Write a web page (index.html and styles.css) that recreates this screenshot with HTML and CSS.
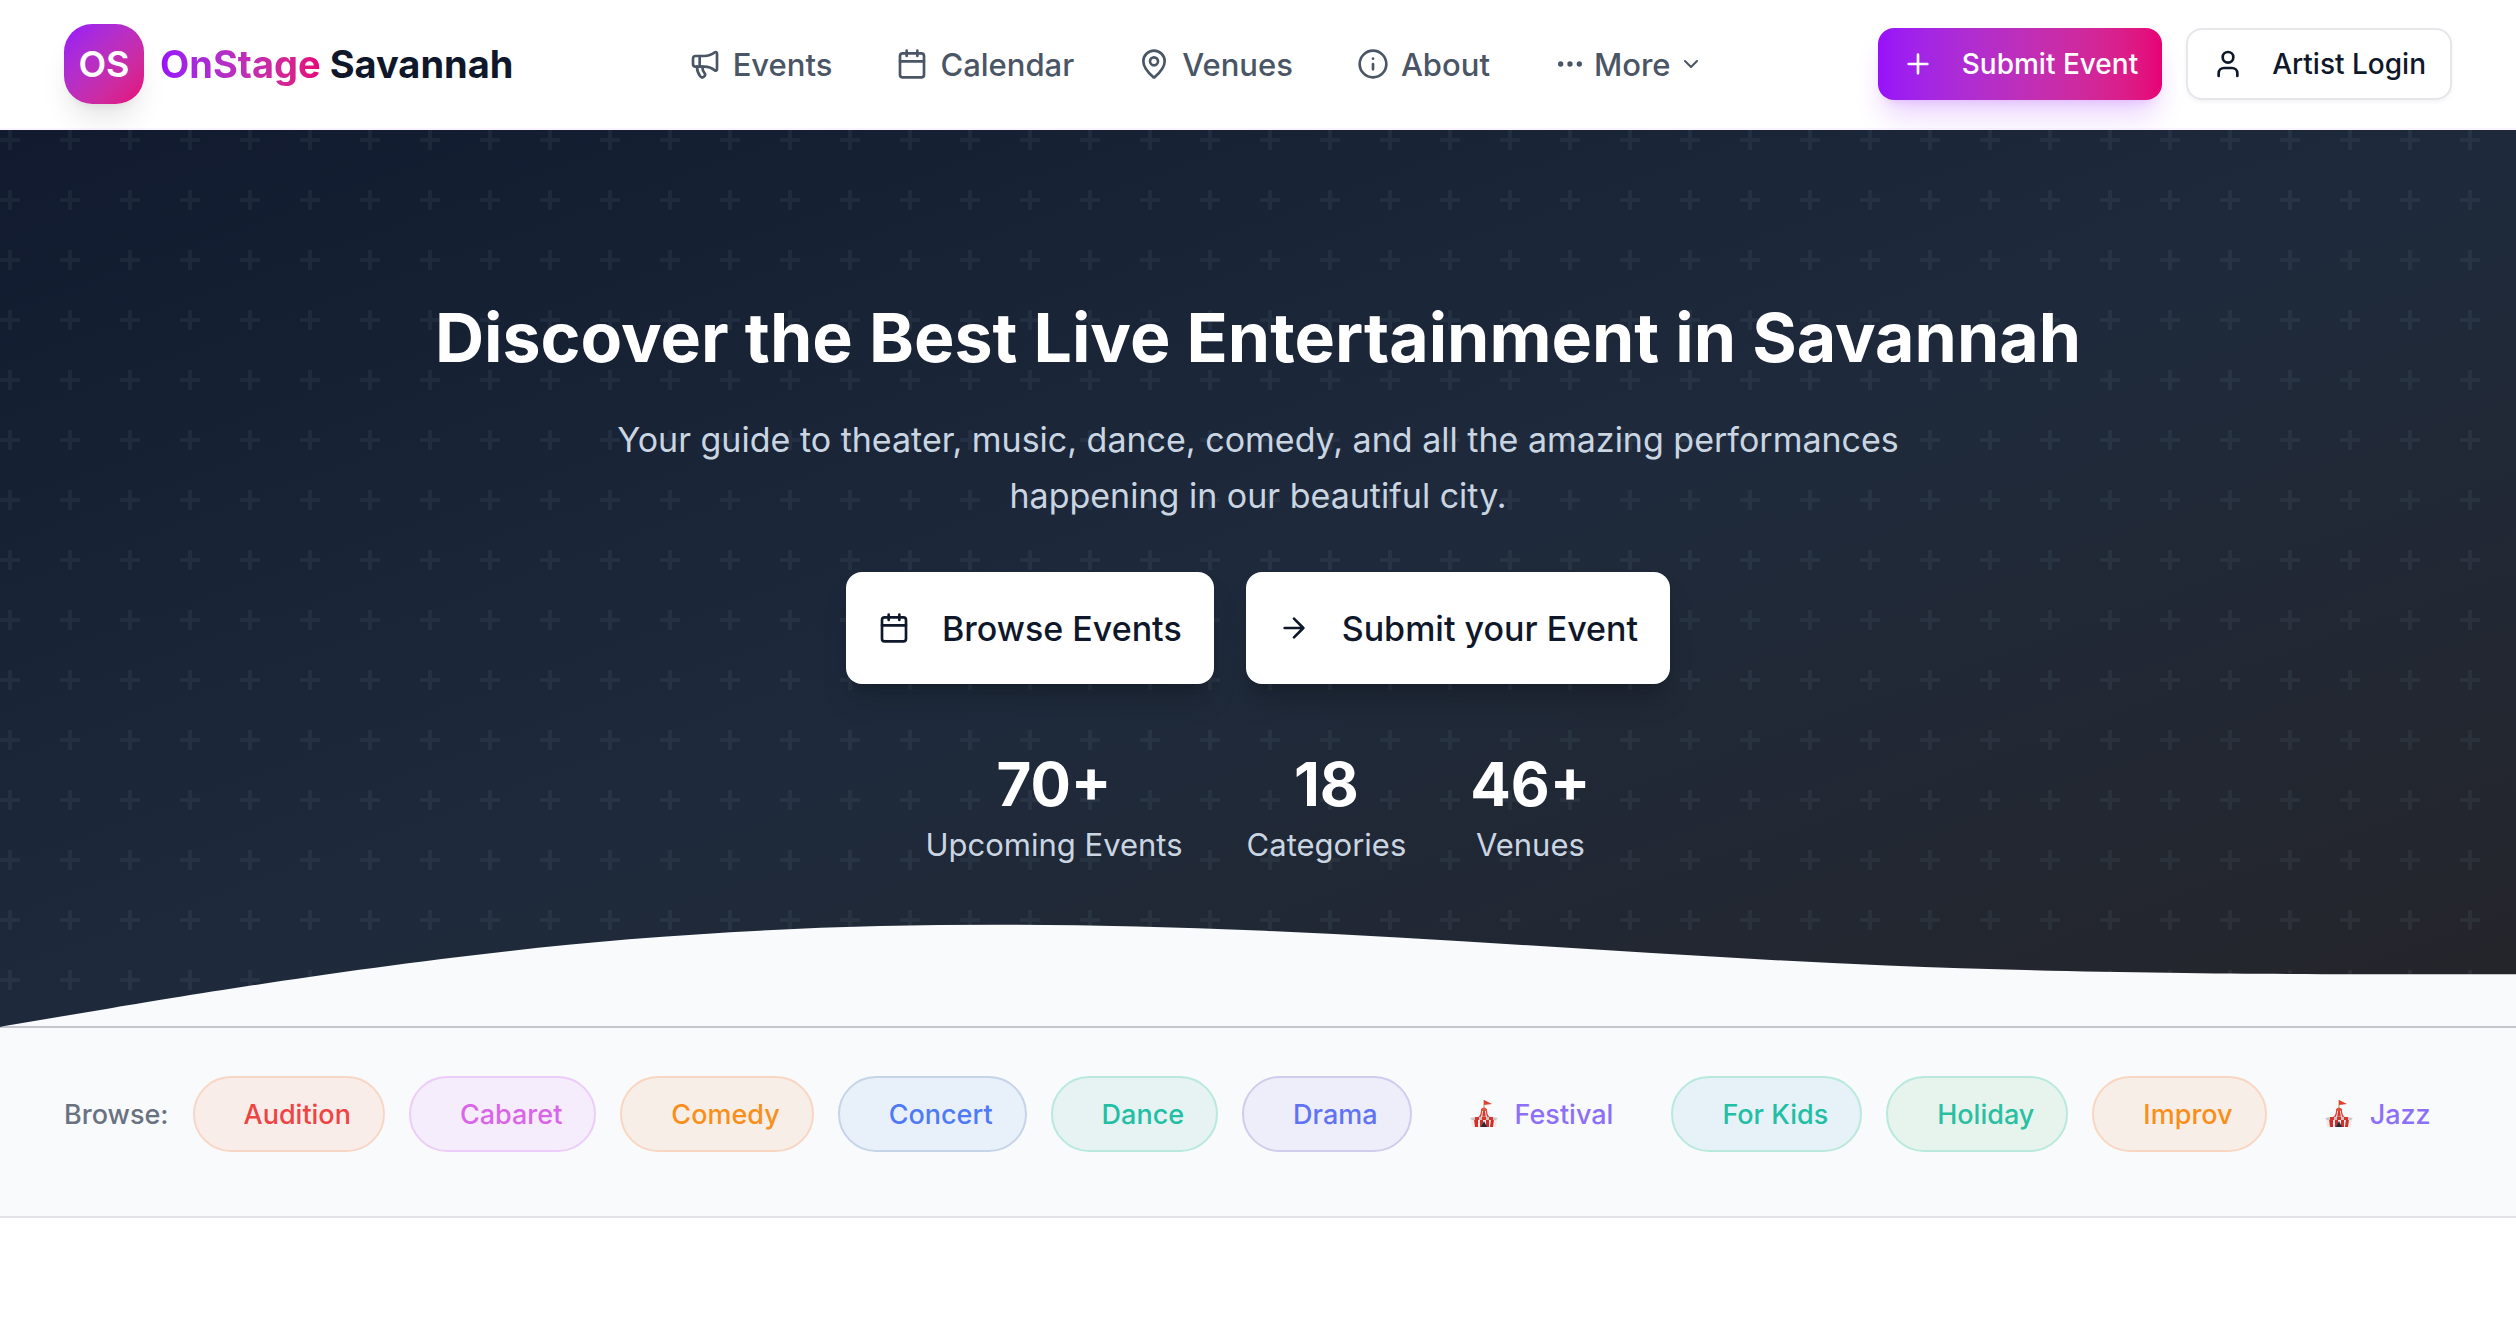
FILE: index.html
```
<!DOCTYPE html>
<html lang="en">
<head>
    <meta charset="UTF-8">
    <meta name="viewport" content="width=device-width, initial-scale=1.0">
    <title>OnStage Savannah</title>
    <link rel="stylesheet" href="styles.css">
</head>
<body>
    <!-- Shared shapes -->
    <svg class="sprite" aria-hidden="true">
        <symbol id="icon-calendar" viewBox="0 0 24 24">
            <path d="M8 2v4M16 2v4M3 10h18"/>
            <rect x="3" y="4" width="18" height="18" rx="2"/>
        </symbol>
        <symbol id="icon-tent" viewBox="0 0 28 28">
            <path d="M14 9V0" stroke="#c98a5a" stroke-width="1"/>
            <path d="M14 0l8 4-8 1z" fill="#e2402f"/>
            <path d="M11 9q3-3 6 0v3h-6z" fill="#e0523f"/>
            <path d="M11 11h6c1 4 4 6 7 8H4c3-2 6-4 7-8z" fill="#f3ebe9"/>
            <path d="M13 11h2l1 8h-4zM11 11h1c0 4-1 6-3 8H6c3-2 5-4 5-8zM17 11h-1c0 4 1 6 3 8h3c-3-2-5-4-5-8z" fill="#d6362c"/>
            <path d="M1 18h26l-1 9H2z" fill="#f0eae9"/>
            <path d="M4 19h4v8H5zM10 19h3v8h-3zM16 19h3v8h-3zM21 19h3l-1 8h-3z" fill="#cf2f28"/>
            <path d="M0 18q14-3 28 0l-2 2H2z" fill="#c9c4c8"/>
            <path d="M5 17h4v3H5zM12 17h4v3h-4zM19 17h4v3h-4z" fill="#d6362c"/>
            <path d="M14 21l3 6h-6z" fill="#1f2c40"/>
        </symbol>
    </svg>

    <header class="site-header">
        <a href="#" class="brand">
            <span class="brand-mark">OS</span>
            <span class="brand-name"><span class="brand-accent">OnStage</span> Savannah</span>
        </a>

        <nav class="main-nav">
            <a href="#">
                <svg class="icon" viewBox="0 0 24 24"><path d="M11 6a13 13 0 0 0 8.400-2.800A1 1 0 0 1 21 4v12a1 1 0 0 1-1.600.8A13 13 0 0 0 11 14H5a2 2 0 0 1-2-2V8a2 2 0 0 1 2-2z"/><path d="M6 14a12 12 0 0 0 2.400 7.200 2 2 0 0 0 3.200-2.400A8 8 0 0 1 10 14M8 6v8"/></svg>
                Events
            </a>
            <a href="#">
                <svg class="icon"><use href="#icon-calendar"/></svg>
                Calendar
            </a>
            <a href="#">
                <svg class="icon" viewBox="0 0 24 24"><path d="M20 10c0 4.993-5.539 10.193-7.399 11.799a1 1 0 0 1-1.202 0C9.539 20.193 4 14.993 4 10a8 8 0 0 1 16 0"/><circle cx="12" cy="10" r="3"/></svg>
                Venues
            </a>
            <a href="#">
                <svg class="icon" viewBox="0 0 24 24"><circle cx="12" cy="12" r="10"/><path d="M12 16v-4M12 8h.01"/></svg>
                About
            </a>
            <button type="button" class="nav-more">
                <svg class="icon" viewBox="0 0 24 24"><circle cx="12" cy="12" r="1"/><circle cx="19" cy="12" r="1"/><circle cx="5" cy="12" r="1"/></svg>
                More
                <svg class="icon icon-small" viewBox="0 0 24 24"><path d="m6 9 6 6 6-6"/></svg>
            </button>
        </nav>

        <div class="header-actions">
            <button type="button" class="btn btn-primary">
                <svg class="icon" viewBox="0 0 24 24"><path d="M5 12h14M12 5v14"/></svg>
                Submit Event
            </button>
            <button type="button" class="btn btn-outline">
                <svg class="icon" viewBox="0 0 24 24"><path d="M19 21v-2a4 4 0 0 0-4-4H9a4 4 0 0 0-4 4v2"/><circle cx="12" cy="7" r="4"/></svg>
                Artist Login
            </button>
        </div>
    </header>

    <main>
        <section class="hero">
            <svg class="hero-pattern" aria-hidden="true">
                <defs>
                    <pattern id="plus" width="60" height="60" patternUnits="userSpaceOnUse">
                        <path d="M8 0h4v8h8v4h-8v8H8v-8H0V8h8z" fill="#8aa0b4" fill-opacity="0.08"/>
                    </pattern>
                </defs>
                <rect width="100%" height="100%" fill="url(#plus)"/>
            </svg>

            <div class="hero-content">
                <h1>Discover the Best Live Entertainment in Savannah</h1>
                <p class="hero-lead">Your guide to theater, music, dance, comedy, and all the amazing performances happening in our beautiful city.</p>

                <div class="hero-actions">
                    <button type="button" class="btn btn-large">
                        <svg class="icon"><use href="#icon-calendar"/></svg>
                        Browse Events
                    </button>
                    <button type="button" class="btn btn-large">
                        <svg class="icon" viewBox="0 0 24 24"><path d="M5 12h14M12 5l7 7-7 7"/></svg>
                        Submit your Event
                    </button>
                </div>

                <div class="stats">
                    <div class="stat">
                        <div class="stat-value">70+</div>
                        <div class="stat-label">Upcoming Events</div>
                    </div>
                    <div class="stat">
                        <div class="stat-value">18</div>
                        <div class="stat-label">Categories</div>
                    </div>
                    <div class="stat">
                        <div class="stat-value">46+</div>
                        <div class="stat-label">Venues</div>
                    </div>
                </div>
            </div>

            <svg class="hero-wave" viewBox="0 0 1440 120" preserveAspectRatio="none" aria-hidden="true">
                <path d="M0 120L60 110C120 100 240 80 360 70C480 60 600 60 720 65C840 70 960 80 1080 85C1200 90 1320 90 1380 90L1440 90V120H0Z"/>
            </svg>
        </section>

        <section class="browse">
            <div class="browse-row">
                <span class="browse-label">Browse:</span>
                <a href="#" class="pill pill-red"><span></span>Audition</a>
                <a href="#" class="pill pill-pink"><span></span>Cabaret</a>
                <a href="#" class="pill pill-orange"><span></span>Comedy</a>
                <a href="#" class="pill pill-blue"><span></span>Concert</a>
                <a href="#" class="pill pill-teal"><span></span>Dance</a>
                <a href="#" class="pill pill-indigo"><span></span>Drama</a>
                <a href="#" class="pill pill-plain"><svg class="emoji"><use href="#icon-tent"/></svg>Festival</a>
                <a href="#" class="pill pill-sky"><span></span>For Kids</a>
                <a href="#" class="pill pill-green"><span></span>Holiday</a>
                <a href="#" class="pill pill-orange"><span></span>Improv</a>
                <a href="#" class="pill pill-plain"><svg class="emoji"><use href="#icon-tent"/></svg>Jazz</a>
            </div>
        </section>
    </main>
</body>
</html>
```

FILE: styles.css
```
* {
    box-sizing: border-box;
}
body {
    margin: 0;
    background: white;
    color: #0f172a;
    font-family: Inter, "Liberation Sans", sans-serif;
    overflow-x: hidden;
}
a {
    color: inherit;
    text-decoration: none;
}
button {
    font-family: inherit;
    cursor: pointer;
}
.sprite {
    position: absolute;
    width: 0;
    height: 0;
}
.icon {
    width: 32px;
    height: 32px;
    flex-shrink: 0;
    fill: none;
    stroke: currentColor;
    stroke-width: 2;
    stroke-linecap: round;
    stroke-linejoin: round;
}
.icon-small {
    width: 24px;
    height: 24px;
}

/* Header */
.site-header {
    display: flex;
    justify-content: space-between;
    align-items: center;
    padding: 24px 64px;
    border-bottom: 2px solid #faf5ff;
}
.brand {
    display: flex;
    align-items: center;
    gap: 16px;
}
.brand-mark {
    display: flex;
    align-items: center;
    justify-content: center;
    width: 80px;
    height: 80px;
    border-radius: 28px;
    background: linear-gradient(135deg in oklab, #9810fa, #e60076);
    color: white;
    font-size: 36px;
    font-weight: 600;
    box-shadow: 0 20px 30px -6px rgba(0,0,0,0.1), 0 8px 12px -8px rgba(0,0,0,0.1);
}
.brand-name {
    font-size: 38px;
    font-weight: 700;
}
.brand-accent {
    background: linear-gradient(90deg in oklab, #9810fa, #e60076);
    background-clip: text;
    -webkit-background-clip: text;
    color: transparent;
}
.main-nav {
    display: flex;
    align-items: center;
    gap: 64px;
    color: #4a5565;
    font-size: 31px;
    font-weight: 500;
}
.main-nav a {
    display: flex;
    align-items: center;
    gap: 12px;
}
.nav-more {
    display: flex;
    align-items: center;
    gap: 8px;
    padding: 0;
    border: none;
    background: none;
    color: inherit;
    font-size: 31px;
    font-weight: 500;
}
.header-actions {
    display: flex;
    gap: 24px;
}
.btn {
    display: flex;
    align-items: center;
    gap: 28px;
    height: 72px;
    padding: 0 24px;
    border: none;
    border-radius: 16px;
    background: white;
    color: #0f172a;
    font-size: 28px;
    font-weight: 500;
}
.btn-primary {
    background: linear-gradient(90deg in oklab, #9810fa, #e60076);
    color: white;
    box-shadow: 0 20px 30px -6px rgba(152,16,250,0.2), 0 8px 12px -8px rgba(152,16,250,0.2);
}
.btn-outline {
    border: 2px solid #e5e7eb;
    box-shadow: 0 2px 4px rgba(0,0,0,0.05);
}
.btn-large {
    gap: 32px;
    height: 112px;
    padding: 0 32px;
    font-size: 34px;
    box-shadow: 0 20px 30px -6px rgba(0,0,0,0.2), 0 8px 12px -8px rgba(0,0,0,0.2);
}

/* Hero */
.hero {
    position: relative;
    padding: 160px 64px 158px;
    border-bottom: 1px solid #c3c6cb;
    background: linear-gradient(to bottom right, #111a2e, #1e2a3c 50%, #25252a);
    color: white;
    text-align: center;
}
.hero-pattern {
    position: absolute;
    inset: 0;
    width: 100%;
    height: 100%;
}
.hero-wave {
    position: absolute;
    left: 0;
    bottom: 0;
    display: block;
    width: 100%;
    fill: #f8fafc;
}
.hero-content {
    position: relative;
    z-index: 1;
    display: flex;
    flex-direction: column;
    align-items: center;
}
h1 {
    margin: 0 0 28px;
    font-size: 68px;
    font-weight: 700;
    line-height: 94px;
}
.hero-lead {
    max-width: 1344px;
    margin: 0 0 48px;
    color: #cad5e2;
    font-size: 34px;
    line-height: 56px;
}
.hero-actions {
    display: flex;
    gap: 32px;
    margin-bottom: 64px;
}
.stats {
    display: flex;
    gap: 64px;
}
.stat-value {
    font-size: 60px;
    font-weight: 700;
    line-height: 73px;
}
.stat-label {
    color: #cad5e2;
    font-size: 31px;
    line-height: 48px;
}

/* Category row */
.browse {
    padding: 48px 64px 64px;
    border-bottom: 2px solid #e2e4e8;
    background: #f8fafc;
}
.browse-row {
    display: flex;
    align-items: center;
    gap: 24px;
    white-space: nowrap;
    font-size: 27px;
    font-weight: 500;
}
.browse-label {
    color: #6a7282;
}
.pill {
    display: flex;
    align-items: center;
    gap: 17px;
    height: 76px;
    padding: 0 32px;
    border: 2px solid transparent;
    border-radius: 38px;
}
.emoji {
    width: 28px;
    height: 28px;
}
.pill-red {
    background: #f9edea;
    border-color: #f8d6c6;
    color: #ef4444;
}
.pill-pink {
    background: #f5edfb;
    border-color: #eccdf9;
    color: #d966e8;
}
.pill-orange {
    background: #f8eee8;
    border-color: #f8d6c2;
    color: #f98f1b;
}
.pill-blue {
    background: #e8f0f9;
    border-color: #c6d4e8;
    color: #4f7af5;
}
.pill-teal {
    background: #e7f3f3;
    border-color: #b9e9dd;
    color: #22bfa5;
}
.pill-indigo {
    background: #edeefa;
    border-color: #d0cdec;
    color: #6073f3;
}
.pill-plain {
    color: #8e70f8;
}
.pill-sky {
    background: #e7f1f8;
    border-color: #b9e9dd;
    color: #22bfa5;
}
.pill-green {
    background: #e7f4ed;
    border-color: #b9e9dd;
    color: #2bbfa2;
}
```
